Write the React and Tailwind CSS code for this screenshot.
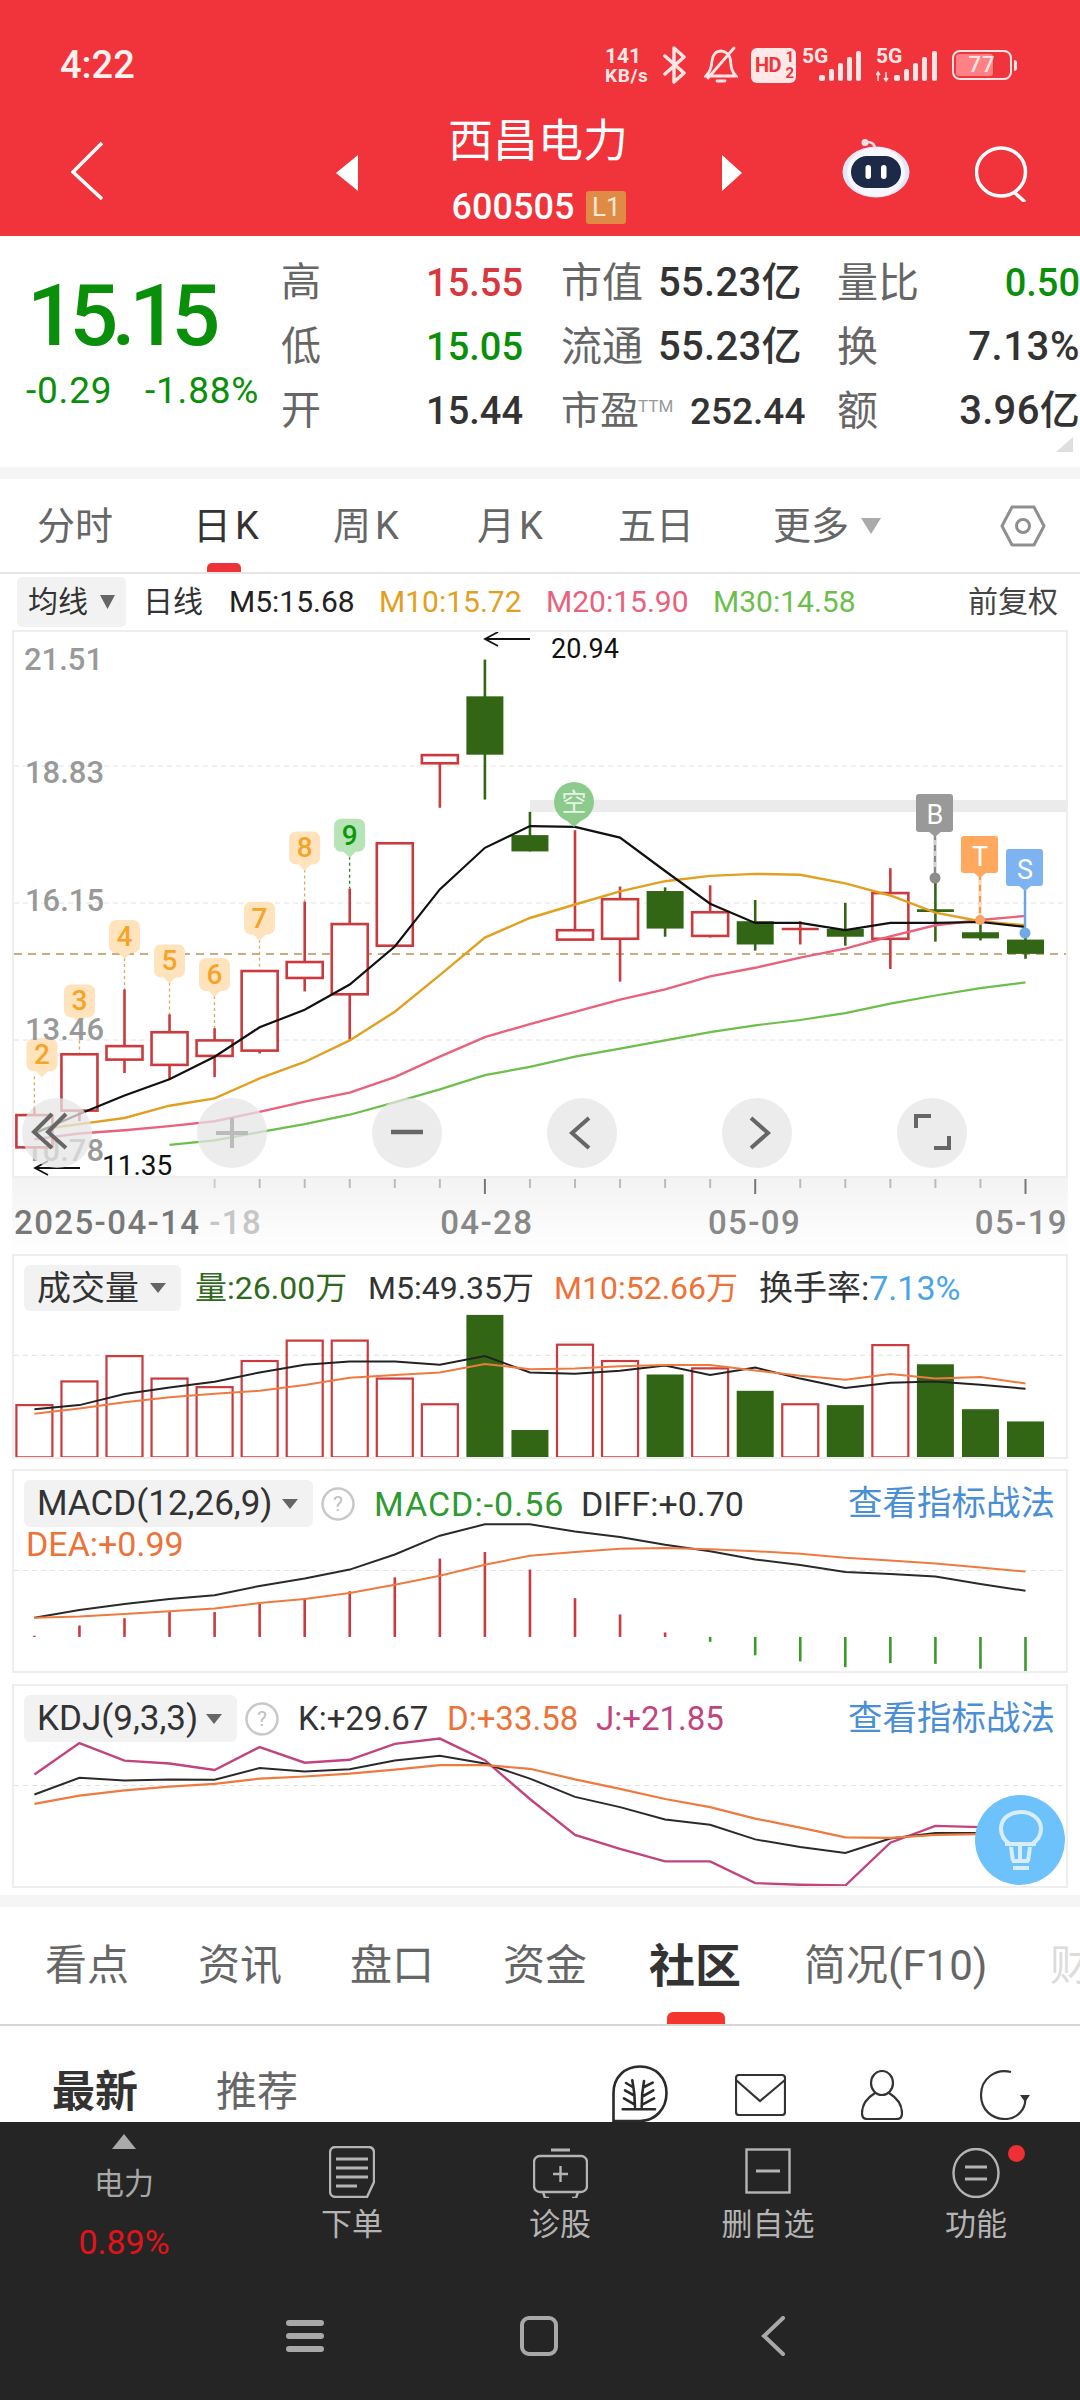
import React from "react";

const cx = (i) => 34.4 + 45.05 * i;
const Y = (z) => 620 + z / 2.45;
const VY = (z) => 1250 + z / 2.45;
const pts = (arr, f, start = 0) => arr.map((z, i) => `${cx(i + start).toFixed(1)},${f(z).toFixed(1)}`).join(" ");

const RED = "#cb3a3e";
const GREEN = "#336614";

// high, top, bottom, low, solid
const candles = [
  [1195, 1213, 1292, 1292, 0], [1064, 1064, 1202, 1228, 0], [905, 1044, 1077, 1110, 0], [966, 1010, 1090, 1125, 0],
  [1000, 1030, 1068, 1120, 0], [860, 860, 1055, 1062, 0], [690, 838, 877, 910, 0], [658, 745, 917, 1028, 0],
  [547, 547, 798, 798, 0], [331, 331, 351, 460, 0], [97, 187, 330, 440, 1], [470, 527, 567, 567, 1],
  [515, 760, 783, 783, 0], [653, 684, 781, 886, 0], [655, 664, 756, 776, 1], [650, 716, 774, 778, 0],
  [686, 738, 795, 810, 1], [738, 757, 757, 795, 2], [693, 757, 776, 798, 1], [608, 669, 781, 855, 0],
  [630, 712, 712, 788, 3], [730, 765, 780, 785, 1], [770, 783, 818, 830, 1],
];
const ma5 = [1258, 1210, 1165, 1125, 1070, 998, 955, 893, 800, 660, 558, 505, 507, 533, 615, 695, 742, 742, 760, 742, 742, 740, 752];
const ma10 = [1250, 1235, 1220, 1190, 1172, 1123, 1083, 1030, 960, 870, 778, 730, 697, 665, 640, 627, 622, 624, 645, 675, 717, 738, 748];
const ma20 = [1272, 1258, 1250, 1240, 1228, 1205, 1180, 1158, 1120, 1070, 1022, 990, 960, 930, 905, 873, 852, 827, 805, 775, 748, 735, 725];
const ma30 = [1286, 1275, 1255, 1235, 1212, 1182, 1150, 1115, 1095, 1070, 1050, 1030, 1010, 993, 980, 963, 940, 920, 902, 888];

const vols = [[380, 0], [322, 0], [260, 0], [315, 0], [336, 0], [272, 0], [222, 0], [222, 0], [315, 0], [378, 0], [159, 1], [441, 1], [232, 0], [272, 0], [305, 1], [290, 0], [345, 1], [378, 0], [380, 1], [233, 0], [280, 1], [390, 1], [420, 1]];
const volK = [390, 380, 353, 337, 323, 300, 281, 273, 273, 281, 260, 300, 303, 296, 283, 306, 288, 315, 338, 325, 322, 330, 340];
const volO = [401, 388, 373, 361, 352, 345, 331, 313, 306, 300, 279, 292, 290, 285, 282, 282, 295, 308, 318, 304, 315, 311, 327];

const diff = [901, 882, 867, 855, 846, 823, 805, 783, 746, 700, 672, 672, 690, 703, 722, 738, 758, 772, 789, 794, 800, 818, 835];
const dea = [901, 898, 892, 885, 878, 865, 855, 840, 820, 798, 771, 749, 740, 732, 730, 733, 738, 744, 754, 761, 768, 778, 788];
const hist = [945, 920, 902, 887, 887, 867, 853, 836, 802, 756, 740, 783, 853, 893, 937, 960, 993, 1008, 1022, 1012, 1014, 1026, 1033];

const jL = [1285, 1208, 1251, 1258, 1274, 1218, 1256, 1249, 1210, 1197, 1250, 1345, 1433, 1467, 1498, 1498, 1551, 1555, 1557, 1452, 1411, 1414, 1470];
const kL = [1334, 1293, 1300, 1297, 1298, 1269, 1278, 1272, 1251, 1239, 1258, 1295, 1340, 1365, 1395, 1408, 1444, 1463, 1477, 1442, 1428, 1428, 1470];
const dL = [1357, 1337, 1324, 1315, 1308, 1295, 1290, 1283, 1273, 1262, 1262, 1271, 1297, 1320, 1345, 1365, 1393, 1415, 1439, 1440, 1433, 1431, 1428];

const tags = [
  ["2", 42, 1025, 1195, 0], ["3", 79.5, 893, 1064, 0], ["4", 124.5, 735, 905, 0], ["5", 169.5, 795, 966, 0],
  ["6", 214.5, 828, 1000, 0], ["7", 259.5, 690, 860, 0], ["8", 304.6, 518, 690, 0], ["9", 349.6, 487, 658, 1],
];

const Tri = ({ cls = "w-[15px] h-[10px]", color = "#666" }) => (
  <svg viewBox="0 0 15 10" preserveAspectRatio="none" className={cls}><path d="M0 0H15L7.5 10Z" fill={color} /></svg>
);

const Help = () => (
  <svg viewBox="0 0 36 36" className="w-[36px] h-[36px]">
    <circle cx="18" cy="18" r="15.5" fill="none" stroke="#c8c8c8" strokeWidth="2.5" />
    <text x="18" y="25" textAnchor="middle" fontSize="21" fill="#c0c0c0">?</text>
  </svg>
);

function Stat({ label, value, valueCls = "text-[#333]", mid, last, lastCls = "text-[38px] text-[#333]", lastLabel }) {
  return (
    <div className="flex items-center h-[64px]">
      <span className="w-[40px] text-[40px] leading-none text-[#666]">{label}</span>
      <span className={`w-[202px] text-right text-[38px] leading-none font-medium ${valueCls}`}>{value}</span>
      <div className="w-[276px] ml-[38px] flex items-center whitespace-nowrap">{mid}</div>
      <span className="w-[84px] text-[41px] leading-none text-[#666] whitespace-nowrap">{lastLabel}</span>
      <span className={`w-[159px] text-right leading-none font-medium whitespace-nowrap ${lastCls}`}>{last}</span>
    </div>
  );
}

const Mid = ({ a, b }) => (
  <>
    <span className="w-[97px] text-[41px] leading-none text-[#666]">{a}</span>
    <span className="text-[40px] leading-none font-medium text-[#333] whitespace-nowrap tracking-[0.3px]">{b}</span>
  </>
);

function Round({ left, children }) {
  return (
    <div className={`absolute top-[466px] w-[70px] h-[70px] rounded-full bg-[#e6e6e6]/75 ${left}`}>
      <svg viewBox="0 0 70 70" className="w-full h-full" fill="none" stroke="#666" strokeWidth="4">{children}</svg>
    </div>
  );
}

function MainChart() {
  return (
    <div className="relative mx-[12px] h-[548px] border-2 border-[#eeeeee] overflow-hidden">
      <svg viewBox="14 632 1052 544" className="absolute inset-0 w-full h-full">
        {[766, 903, 1040].map((y) => <line key={y} x1="14" x2="1066" y1={y} y2={y} stroke="#e2e2e2" strokeDasharray="5 4" />)}
        <rect x="530" y="800" width="536" height="12" fill="#ebebeb" />
        <line x1="14" x2="1066" y1="954" y2="954" stroke="#c9ae82" strokeWidth="2" strokeDasharray="8 6" />
        {tags.map(([t, x, z, hi, g]) => {
          const top = Y(z);
          const col = g ? "#b6e4b6" : "#ffe3bd";
          return (
            <g key={t}>
              <line x1={x === 42 ? 34.4 : x} x2={x === 42 ? 34.4 : x} y1={top + 38} y2={Y(hi)} stroke={g ? "#2f7a2f" : "#d9aa5c"} strokeWidth="1.3" strokeDasharray="3 3" />
              <rect x={x - 15.5} y={top} width="31" height="33" rx="7" fill={col} />
              <path d={`M${x - 7} ${top + 32}H${x + 7}L${x} ${top + 39}Z`} fill={col} />
              <text x={x} y={top + 26} textAnchor="middle" fontSize="28" fontWeight="500" fill={g ? "#0a990a" : "#f4a429"}>{t}</text>
            </g>
          );
        })}
        {[["21.51", 24, 670], ["18.83", 25, 783], ["16.15", 25, 911], ["13.46", 25, 1040], ["10.78", 25, 1161]].map(([t, x, y]) => (
          <text key={t} x={x} y={y} fontSize="31" fontWeight="500" fill="#999">{t}</text>
        ))}
        {candles.map(([hi, t, b, lo, s], i) => {
          const x = cx(i);
          const col = s === 1 || s === 3 ? GREEN : RED;
          return (
            <g key={i}>
              <line x1={x} x2={x} y1={Y(hi)} y2={Y(lo)} stroke={col} strokeWidth="2.6" />
              {s === 1 && <rect x={x - 18.5} y={Y(t)} width="37" height={Y(b) - Y(t)} fill={GREEN} />}
              {s === 0 && <rect x={x - 18} y={Y(t)} width="36" height={Y(b) - Y(t)} fill="#fff" stroke={RED} strokeWidth="2.6" />}
              {s >= 2 && <line x1={x - 18.5} x2={x + 18.5} y1={Y(t)} y2={Y(t)} stroke={col} strokeWidth="2.6" />}
            </g>
          );
        })}
        <polyline points={pts(ma30, Y, 3)} fill="none" stroke="#6cbf4a" strokeWidth="2.2" />
        <polyline points={pts(ma20, Y)} fill="none" stroke="#e9617c" strokeWidth="2.4" />
        <polyline points={pts(ma10, Y)} fill="none" stroke="#e2a021" strokeWidth="2.4" />
        <polyline points={pts(ma5, Y)} fill="none" stroke="#111" strokeWidth="2.2" />

        <circle cx="574" cy="802" r="20" fill="#8ccb8c" />
        <path d="M566 820H582L574 827Z" fill="#8ccb8c" />
        <text x="574" y="811" textAnchor="middle" fontSize="25" fill="#e6f5e6">空</text>

        <line x1="935" x2="935" y1="836" y2="877" stroke="#888" strokeWidth="2.5" />
        <line x1="935" x2="935" y1="840" y2="875" stroke="#fff" strokeWidth="1.2" strokeDasharray="5 6" />
        <circle cx="935" cy="878" r="5.5" fill="#8c8c8c" />
        <rect x="916" y="794" width="37" height="38" rx="3" fill="#999" />
        <path d="M928 831H942L935 837Z" fill="#999" />
        <text x="935" y="824" textAnchor="middle" fontSize="27" fill="#fff">B</text>

        <line x1="980" x2="980" y1="877" y2="918" stroke="#f29a50" strokeWidth="2.5" />
        <line x1="980" x2="980" y1="880" y2="918" stroke="#fff" strokeWidth="1.2" strokeDasharray="5 6" />
        <circle cx="980" cy="920" r="5" fill="#f7a469" />
        <rect x="961" y="836" width="37" height="37" rx="3" fill="#ffa85e" />
        <path d="M973 872H987L980 878Z" fill="#ffa85e" />
        <text x="980" y="866" textAnchor="middle" fontSize="27" fill="#fff">T</text>

        <line x1="1025" x2="1025" y1="890" y2="932" stroke="#6ea4e0" strokeWidth="2.5" />
        <circle cx="1025" cy="933" r="5.5" fill="#6fa9e6" />
        <rect x="1006" y="849" width="37" height="37" rx="3" fill="#7cb3f0" />
        <path d="M1018 885H1032L1025 891Z" fill="#7cb3f0" />
        <text x="1025" y="879" textAnchor="middle" fontSize="27" fill="#fff">S</text>

        <path d="M530 639H485M498 632L485 639L498 646" fill="none" stroke="#111" strokeWidth="1.8" />
        <text x="551" y="658" fontSize="27" fill="#111">20.94</text>
        <path d="M80 1168H35M48 1161L35 1168L48 1175" fill="none" stroke="#111" strokeWidth="1.8" />
        <text x="102" y="1175" fontSize="28" fill="#111">11.35</text>
      </svg>

      <Round left="left-[8px]"><path d="M30 16L12 34L30 50M44 16L26 34L44 50" /></Round>
      <Round left="left-[183px]"><path d="M35 20V50M19 35H51" stroke="#bbb" /></Round>
      <Round left="left-[358px]"><path d="M19 34H51" strokeWidth="4.5" /></Round>
      <Round left="left-[533px]"><path d="M42 20L25 35L42 50" /></Round>
      <Round left="left-[708px]"><path d="M29 20L46 35L29 50" /></Round>
      <Round left="left-[883px]"><path d="M34 18H19V30M37 50H52V38" /></Round>
    </div>
  );
}

function DateAxis() {
  return (
    <div className="relative mx-[12px] h-[75px] bg-linear-to-b from-[#f3f3f3] to-white text-[33px] leading-none font-medium text-[#787878]">
      <svg viewBox="12 1176 1056 20" className="w-[1056px] h-[20px] block">
        {candles.map((_, i) =>
          i >= 4 ? (
            <line key={i} x1={cx(i)} x2={cx(i)} y1="1177" y2={[10, 16, 22].includes(i) ? 1192 : 1186} stroke={[10, 16, 22].includes(i) ? "#777" : i === 4 ? "#ccc" : "#bbb"} strokeWidth="2" />
          ) : null
        )}
      </svg>
      <div className="flex items-center h-[44px] mt-[2px] tracking-[1.4px] whitespace-nowrap">
        <span className="ml-[2px] w-[196px]">2025-04-14</span>
        <span className="w-[232px] text-[#c6c6c6]">-18</span>
        <span className="w-[269px] text-[#888]">04-28</span>
        <span className="w-[268px] text-[#888]">05-09</span>
        <span className="text-[#888]">05-19</span>
      </div>
    </div>
  );
}

function VolPanel() {
  return (
    <div className="relative mx-[12px] h-[205px] border-2 border-[#eeeeee]">
      <svg viewBox="14 1256 1052 201" className="absolute inset-0 w-full h-full">
        <line x1="14" x2="1066" y1={VY(258)} y2={VY(258)} stroke="#e2e2e2" strokeDasharray="5 4" />
        {vols.map(([z, s], i) =>
          s ? (
            <rect key={i} x={cx(i) - 18.5} y={VY(z)} width="37" height={VY(510) - VY(z)} fill={GREEN} />
          ) : (
            <rect key={i} x={cx(i) - 18} y={VY(z)} width="36" height={VY(508) - VY(z)} fill="none" stroke={RED} strokeWidth="2.2" />
          )
        )}
        <polyline points={pts(volK, VY)} fill="none" stroke="#222" strokeWidth="2" />
        <polyline points={pts(volO, VY)} fill="none" stroke="#ef7a3f" strokeWidth="2" />
      </svg>
      <div className="relative flex items-center h-[46px] mt-[9px] text-[32px] leading-none whitespace-nowrap">
        <div className="ml-[10px] w-[157px] h-[46px] rounded-[6px] bg-[#f2f2f2] flex items-center pl-[13px] text-[#333]">
          <span className="w-[113px] text-[34px]">成交量</span>
          <Tri cls="w-[16px] h-[10px]" />
        </div>
        <span className="ml-[14px] w-[173px] text-[#2f6a1c]">量:26.00万</span>
        <span className="w-[186px] text-[#333]">M5:49.35万</span>
        <span className="w-[205px] text-[#ee7238]">M10:52.66万</span>
        <span className="text-[34px] text-[#333]">换手率:<span className="text-[#4aa4e6]">7.13%</span></span>
      </div>
    </div>
  );
}

function Panel({ title, boxW, titleW, h, top, children, head, line2 }) {
  return (
    <div className="relative mx-[12px] border-2 border-[#eeeeee] overflow-hidden" style={{ height: h }}>
      <svg viewBox={`14 ${top + 2} 1052 ${h - 4}`} className="absolute inset-0 w-full h-full">{children}</svg>
      <div className="relative flex items-center h-[47px] mt-[9px] text-[33px] leading-none whitespace-nowrap">
        <div className="ml-[10px] h-[47px] rounded-[6px] bg-[#f2f2f2] flex items-center pl-[13px] text-[35px] text-[#333]" style={{ width: boxW }}>
          <span style={{ width: titleW }}>{title}</span>
          <Tri cls="w-[16px] h-[10px]" />
        </div>
        <span className="ml-[7px] mr-[18px] flex"><Help /></span>
        {head}
        <span className="absolute left-[834px] text-[34.5px] text-[#4a8ed6]">查看指标战法</span>
      </div>
      {line2}
    </div>
  );
}

const Bulb = () => (
  <div className="absolute left-[961px] top-[109px] w-[90px] h-[90px] rounded-full bg-[#6ec2fc]">
    <svg viewBox="0 0 90 90" className="w-full h-full" fill="none" stroke="#d8eeff" strokeWidth="4">
      <path d="M36 50C28 45 26 38 26 34C26 23 35 17 46 17C57 17 66 24 66 34C66 40 62 46 56 50" />
      <path d="M30 49H61M45 49V66M36 52L38 66M55 52L53 66M37 66H54M38 73H54" />
    </svg>
  </div>
);

const Bottom = ({ label, children }) => (
  <div className="w-[208px] flex flex-col items-center">
    <div className="h-[56px] flex items-end">{children}</div>
    <span className="mt-[7px] text-[31px] leading-[40px] text-[#b4b4b4] whitespace-nowrap">{label}</span>
  </div>
);

export default function App() {
  return (
    <div className="w-[1080px] h-[2400px] overflow-hidden bg-white flex flex-col font-[Roboto,'Noto_Sans_CJK_SC',sans-serif]">
      <header className="h-[236px] shrink-0 bg-[#f1333b] text-white">
        <div className="flex items-center h-[40px] pt-[45px] box-content">
          <span className="ml-[60px] w-[77px] text-[38px] leading-none font-medium text-[#fff1ef] whitespace-nowrap">4:22</span>
          <div className="ml-[468px] w-[47px] flex flex-col font-bold text-[#ffe6e4] whitespace-nowrap">
            <span className="text-[21px] leading-[20px]">141</span>
            <span className="text-[19px] leading-[19px] tracking-[0.6px]">KB/s</span>
          </div>
          <svg viewBox="0 0 25 38" className="ml-[10px] w-[25px] h-[38px]" fill="none" stroke="#ffe6e4" strokeWidth="3.4" strokeLinecap="round" strokeLinejoin="round">
            <path d="M3 10L22 27L12 36V2L22 11L3 28" />
          </svg>
          <svg viewBox="0 0 34 38" className="ml-[17px] w-[34px] h-[38px]" fill="none" stroke="#ffe6e4" strokeWidth="2.8" strokeLinecap="round">
            <path d="M2 30H32C27 25 27 20 26.500 14C25.500 8 21 5 17 5C12 5 8.500 9 8 15C7.500 22 6 26 2 30ZM13 35H21M4 32L30 2" />
          </svg>
          <div className="ml-[13px] w-[45px] h-[35px] rounded-[6px] bg-[#ffe9e8] relative flex items-center">
            <span className="ml-[4px] text-[20px] leading-none font-bold text-[#f1333b] tracking-[-0.5px]">HD</span>
            <span className="absolute right-[2px] top-[1px] text-[15px] leading-[16px] font-bold text-[#f1333b] flex flex-col items-center"><span>1</span><span>2</span></span>
          </div>
          <div className="ml-[6px] w-[60px] h-[34px] relative">
            <span className="absolute left-0 top-[-2px] text-[21px] leading-[21px] font-bold text-[#ffe6e4]">5G</span>
            <svg viewBox="0 0 60 34" className="w-[60px] h-[34px]" fill="#ffe6e4">
              <rect x="17" y="27" width="6" height="6" rx="2" />
              <rect x="27" y="21" width="5" height="12" rx="2" />
              <rect x="36" y="15" width="5" height="18" rx="2" />
              <rect x="45" y="9" width="5" height="24" rx="2" />
              <rect x="54" y="3" width="5" height="30" rx="2" />
            </svg>
          </div>
          <div className="ml-[14px] w-[62px] h-[34px] relative">
            <span className="absolute left-0 top-[-2px] text-[21px] leading-[21px] font-bold text-[#ffe6e4]">5G</span>
            <svg viewBox="0 0 62 34" className="w-[62px] h-[34px]" fill="#ffe6e4">
              <path d="M2 24V33M0 27L2 24L4 27M10 33V24M8 30L10 33L12 30" stroke="#ffe6e4" strokeWidth="1.5" fill="none" />
              <rect x="18" y="27" width="6" height="6" rx="2" />
              <rect x="28" y="21" width="5" height="12" rx="2" />
              <rect x="37" y="15" width="5" height="18" rx="2" />
              <rect x="46" y="9" width="5" height="24" rx="2" />
              <rect x="56" y="3" width="5" height="30" rx="2" />
            </svg>
          </div>
          <div className="ml-[14px] w-[60px] h-[30px] rounded-[8px] border-2 border-[#ffe6e4] relative flex items-center justify-center overflow-hidden">
            <div className="absolute left-[2px] top-[2px] bottom-[2px] w-[37px] rounded-[3px] bg-[#ff8085]" />
            <span className="relative text-[22px] leading-none font-medium tracking-[1px] text-[#ffe6e4]">77</span>
          </div>
          <div className="ml-[2px] w-[3px] h-[11px] rounded-r bg-[#ffe6e4]" />
        </div>
        <div className="flex items-start mt-[35px]">
          <svg viewBox="0 0 32 60" className="ml-[71px] mt-[21px] w-[32px] h-[60px]" fill="none" stroke="#fff" strokeWidth="3.5">
            <path d="M31 2L2 31L31 58" />
          </svg>
          <svg viewBox="0 0 22 36" className="ml-[233px] mt-[35px] w-[22px] h-[36px]"><path d="M22 0V36L0 18Z" fill="#fff" /></svg>
          <div className="w-[364px] flex flex-col items-center">
            <span className="text-[45px] leading-[44px] -ml-[4px]">西昌电力</span>
            <div className="flex items-center mt-[26px] -ml-[2px]">
              <span className="text-[36px] leading-[34px] font-medium">600505</span>
              <span className="ml-[12px] w-[40px] h-[33px] rounded-[3px] bg-[#e08b45] text-[26px] leading-[33px] text-center text-[#ffe9d6]">L1</span>
            </div>
          </div>
          <svg viewBox="0 0 20 36" className="mt-[35px] w-[20px] h-[36px]"><path d="M0 0V36L20 18Z" fill="#fff" /></svg>
          <svg viewBox="0 0 68 62" className="ml-[100px] mt-[19px] w-[68px] h-[62px]">
            <circle cx="23" cy="3.500" r="3.500" fill="#f4dfe8" />
            <path d="M25 3C30 3 33 5 33 10" fill="none" stroke="#f4dfe8" strokeWidth="2.5" />
            <ellipse cx="34" cy="33" rx="33.500" ry="25.500" fill="#e6e6fb" />
            <ellipse cx="34" cy="33" rx="29" ry="24.500" fill="#f7f7ff" />
            <rect x="9" y="17" width="50" height="32" rx="16" fill="#1d2a47" />
            <rect x="23.500" y="26" width="5.500" height="14" rx="2.700" fill="#fff" />
            <rect x="39" y="26" width="5.500" height="14" rx="2.700" fill="#fff" />
          </svg>
          <svg viewBox="0 0 53 56" className="ml-[65px] mt-[26px] w-[53px] h-[56px]" fill="none" stroke="#fff" strokeWidth="3.5">
            <ellipse cx="26" cy="26" rx="24.500" ry="24" /><path d="M39 46L50 56" />
          </svg>
        </div>
      </header>

      <section className="h-[231px] shrink-0 flex">
        <div className="w-[281px] shrink-0">
          <div className="mt-[38px] ml-[27px] h-[84px] text-[86px] leading-[84px] font-medium text-[#0a8f0a] tracking-[-6.5px] whitespace-nowrap">15.15</div>
          <div className="mt-[10px] ml-[26px] h-[44px] flex items-center text-[37px] leading-none tracking-[0.8px] text-[#0a8f0a] whitespace-nowrap">
            <span className="w-[119px]">-0.29</span><span>-1.88%</span>
          </div>
        </div>
        <div className="pt-[15px] relative flex-1">
          <Stat label="高" value="15.55" valueCls="text-[#d9363e]" lastLabel="量比" last="0.50" lastCls="text-[38px] text-[#0a8f0a]" mid={<Mid a="市值" b="55.23亿" />} />
          <Stat label="低" value="15.05" valueCls="text-[#0a8f0a]" lastLabel="换" last="7.13%" lastCls="text-[40px] tracking-[0.6px] text-[#333]" mid={<Mid a="流通" b="55.23亿" />} />
          <Stat label="开" value="15.44" lastLabel="额" last="3.96亿" lastCls="text-[40px] tracking-[0.3px] text-[#333]"
            mid={<>
              <span className="w-[77px] text-[39px] leading-none text-[#666]">市盈</span>
              <span className="w-[52px] text-[17px] leading-none text-[#999] self-start pt-[6px]">TTM</span>
              <span className="text-[37px] leading-none font-medium text-[#333]">252.44</span>
            </>} />
          <svg viewBox="0 0 17 15" className="absolute right-[7px] top-[201px] w-[17px] h-[15px]"><path d="M17 0V15H0Z" fill="#dedede" /></svg>
        </div>
      </section>

      <div className="h-[12px] shrink-0 bg-[#f5f5f5]" />

      <nav className="h-[93px] shrink-0 flex items-center pl-[37px] text-[38px] leading-none text-[#666] relative whitespace-nowrap">
        <span className="w-[156px]">分时</span>
        <span className="w-[140px] text-[#333] tracking-[4px]">日K</span>
        <span className="w-[144px] tracking-[4px]">周K</span>
        <span className="w-[141px] tracking-[4px]">月K</span>
        <span className="w-[155px]">五日</span>
        <span className="w-[88px]">更多</span>
        <Tri cls="w-[20px] h-[16px]" color="#aaa" />
        <svg viewBox="0 0 46 42" className="ml-[119px] w-[46px] h-[42px]" fill="none" stroke="#8f8f8f" strokeWidth="3">
          <path d="M12 2H34L44 21L34 40H12L2 21Z" strokeLinejoin="round" /><circle cx="23" cy="21" r="6.500" />
        </svg>
        <div className="absolute left-[207px] bottom-0 w-[34px] h-[9px] rounded-t-[5px] bg-[#ee3237]" />
      </nav>
      <div className="h-[2px] shrink-0 bg-[#e6e6e6]" />

      <div className="h-[56px] shrink-0 flex items-center text-[30px] leading-none whitespace-nowrap">
        <div className="ml-[17px] w-[109px] h-[50px] rounded-[5px] bg-[#f2f2f2] flex items-center pl-[11px] text-[#333]">
          <span className="w-[72px]">均线</span><Tri cls="w-[15px] h-[14px]" />
        </div>
        <span className="ml-[17px] w-[86px] text-[#333]">日线</span>
        <span className="w-[150px] text-[#222]">M5:15.68</span>
        <span className="w-[167px] text-[#e2a021]">M10:15.72</span>
        <span className="w-[167px] text-[#e9617c]">M20:15.90</span>
        <span className="w-[255px] text-[#6cbf4a]">M30:14.58</span>
        <span className="text-[#444]">前复权</span>
      </div>

      <MainChart />
      <DateAxis />
      <div className="h-[1px] shrink-0" />
      <VolPanel />
      <div className="h-[10px] shrink-0" />

      <Panel
        title="MACD(12,26,9)" boxW={289} titleW={245} h={204} top={1469}
        head={<>
          <span className="w-[207px] text-[34px] tracking-[1px] text-[#2f9a2f]">MACD:-0.56</span>
          <span className="text-[34px] text-[#333]">DIFF:+0.70</span>
        </>}
        line2={<div className="relative ml-[12px] -mt-[2px] text-[34px] leading-[38px] text-[#ee7238]">DEA:+0.99</div>}
      >
        <line x1="14" x2="1066" y1={VY(785)} y2={VY(785)} stroke="#e2e2e2" strokeDasharray="5 4" />
        {hist.map((z, i) => {
          const b = VY(948);
          const up = z < 948;
          return <line key={i} x1={cx(i)} x2={cx(i)} y1={b} y2={VY(z)} stroke={up ? RED : "#3a9a2a"} strokeWidth="2.6" />;
        })}
        <polyline points={pts(diff, VY)} fill="none" stroke="#2a2a2a" strokeWidth="2" />
        <polyline points={pts(dea, VY)} fill="none" stroke="#ef7a3f" strokeWidth="2" />
      </Panel>
      <div className="h-[11px] shrink-0" />

      <Panel
        title="KDJ(9,3,3)" boxW={213} titleW={169} h={204} top={1684}
        head={<>
          <span className="w-[149px] text-[#333]">K:+29.67</span>
          <span className="w-[149px] text-[#ee7238]">D:+33.58</span>
          <span className="text-[#c2447e]">J:+21.85</span>
        </>}
        line2={<Bulb />}
      >
        <line x1="14" x2="1066" y1={VY(1312)} y2={VY(1312)} stroke="#e2e2e2" strokeDasharray="5 4" />
        <polyline points={pts(jL, VY)} fill="none" stroke="#c2447e" strokeWidth="2.4" />
        <polyline points={pts(kL, VY)} fill="none" stroke="#2a2a2a" strokeWidth="2" />
        <polyline points={pts(dL, VY)} fill="none" stroke="#ef7a3f" strokeWidth="2.2" />
      </Panel>

      <div className="h-[7px] shrink-0" />
      <div className="h-[12px] shrink-0 bg-[#f5f5f5]" />

      <nav className="h-[117px] shrink-0 flex items-center text-[42px] leading-none text-[#666] relative whitespace-nowrap overflow-hidden">
        <span className="ml-[45px] w-[153px] shrink-0">看点</span>
        <span className="w-[152px] shrink-0">资讯</span>
        <span className="w-[153px] shrink-0">盘口</span>
        <span className="w-[146px] shrink-0">资金</span>
        <span className="w-[155px] shrink-0 text-[46px] font-bold text-[#333]">社区</span>
        <span className="w-[246px] shrink-0">简况(F10)</span>
        <span className="shrink-0 text-[#dcdcdc]">财</span>
        <div className="absolute left-[667px] bottom-0 w-[58px] h-[12px] rounded-t-[6px] bg-[#f4352d]" />
      </nav>
      <div className="h-[2px] shrink-0 bg-[#d6d6d6]" />

      <div className="h-[96px] shrink-0 flex items-start whitespace-nowrap overflow-hidden">
        <span className="mt-[36px] ml-[52px] w-[164px] text-[43px] leading-[60px] font-bold text-[#333]">最新</span>
        <span className="mt-[36px] text-[41px] leading-[60px] text-[#666]">推荐</span>
        <svg viewBox="0 0 56 58" className="ml-[314px] mt-[39px] w-[56px] h-[58px]" fill="none" stroke="#2a2a2a" strokeWidth="2.6" strokeLinecap="round">
          <path d="M1.500 58V28C1.500 12 13 1.500 28 1.500C43 1.500 54.500 12 54.500 28C54.500 44 43 56 28 56H1.500" />
          <path d="M10.700 44.300H43M20.300 15.300C22 24 23 33 23 42M32 16C30.500 24 29.700 33 29.700 42M13 25.300L21.300 30M12 33.300L22.300 39.300M14 18L20.700 22M40.700 17.700L32 22M41.300 25.300L31.300 31M42 33.300L30.700 39.300" />
        </svg>
        <svg viewBox="0 0 51 42" className="ml-[67px] mt-[48px] w-[51px] h-[42px]" fill="none" stroke="#333" strokeWidth="2.2">
          <rect x="1" y="1" width="49" height="40" rx="3" /><path d="M1 6L25 27L50 6" />
        </svg>
        <svg viewBox="0 0 42 50" className="ml-[75px] mt-[44px] w-[42px] h-[50px]" fill="none" stroke="#333" strokeWidth="2.2">
          <ellipse cx="21" cy="13" rx="11" ry="12" />
          <path d="M14 23C6 28 1 35 1 43C1 47 3 49 6 49H36C39 49 41 47 41 43C41 35 36 28 28 23" />
        </svg>
        <svg viewBox="0 0 52 50" className="ml-[76px] mt-[44px] w-[52px] h-[50px]" fill="none" stroke="#333" strokeWidth="2.2">
          <path d="M32 2C16 -2 2 9 2 25C2 40 13 49 26 49C39 49 48 38 46 26" />
          <path d="M41 25H51L46 32Z" fill="#333" stroke="none" />
        </svg>
      </div>

      <footer className="flex-1 bg-[#252525]">
        <div className="flex h-[165px]">
          <div className="w-[248px] flex flex-col items-center pt-[12px]">
            <svg viewBox="0 0 24 15" className="w-[24px] h-[15px]"><path d="M12 0L24 15H0Z" fill="#aaa" /></svg>
            <span className="mt-[15px] text-[30px] leading-[40px] text-[#a8a8a8]">电力</span>
            <span className="mt-[19px] text-[34px] leading-[38px] text-[#e0141a]">0.89%</span>
          </div>
          <div className="flex pt-[20px] items-start">
            <Bottom label="下单">
              <svg viewBox="0 0 46 52" className="w-[46px] h-[52px]" fill="none" stroke="#b4b4b4" strokeWidth="2.4">
                <path d="M7 1H39C43 1 45 3 45 7V36L38 51H7C3 51 1 49 1 45V7C1 3 3 1 7 1Z" />
                <path d="M7 13H39M7 22H39M7 31H39M7 40H28" strokeWidth="2.8" />
              </svg>
            </Bottom>
            <Bottom label="诊股">
              <svg viewBox="0 0 55 50" className="w-[55px] h-[50px]" fill="none" stroke="#b4b4b4" strokeWidth="2.4">
                <path d="M18 2H37" strokeWidth="3" />
                <rect x="1" y="8" width="53" height="36" rx="6" />
                <path d="M27.500 18V34M20 26H35M10 44L12 50H16M45 44L43 50H39" />
              </svg>
            </Bottom>
            <Bottom label="删自选">
              <svg viewBox="0 0 46 46" className="w-[46px] h-[46px] mb-[4px]" fill="none" stroke="#b4b4b4" strokeWidth="2.4">
                <rect x="1.500" y="1.500" width="43" height="43" /><path d="M11 23H35" strokeWidth="3" />
              </svg>
            </Bottom>
            <div className="w-[208px] flex flex-col items-center relative">
              <div className="h-[56px] flex items-end">
                <svg viewBox="0 0 48 50" className="w-[48px] h-[50px]" fill="none" stroke="#b4b4b4" strokeWidth="2.4">
                  <ellipse cx="24" cy="25" rx="22.500" ry="24" /><path d="M13 19H35M13 31H35" strokeWidth="3" />
                </svg>
              </div>
              <span className="mt-[7px] text-[31px] leading-[40px] text-[#b4b4b4]">功能</span>
              <div className="absolute left-[136px] top-[3px] w-[17px] h-[17px] rounded-full bg-[#ee2f33]" />
            </div>
          </div>
        </div>
        <div className="flex items-center mt-[29px]">
          <div className="ml-[286px] w-[38px] flex flex-col gap-[7px]">
            <div className="h-[6px] rounded-full bg-[#a8a8a8]" />
            <div className="h-[6px] rounded-full bg-[#a8a8a8]" />
            <div className="h-[6px] rounded-full bg-[#a8a8a8]" />
          </div>
          <div className="ml-[196px] w-[38px] h-[40px] rounded-[9px] border-[4px] border-[#a8a8a8]" />
          <svg viewBox="0 0 24 40" className="ml-[203px] w-[24px] h-[40px]" fill="none" stroke="#a8a8a8" strokeWidth="4" strokeLinecap="round">
            <path d="M22 2L3 20L22 38" />
          </svg>
        </div>
      </footer>
    </div>
  );
}
